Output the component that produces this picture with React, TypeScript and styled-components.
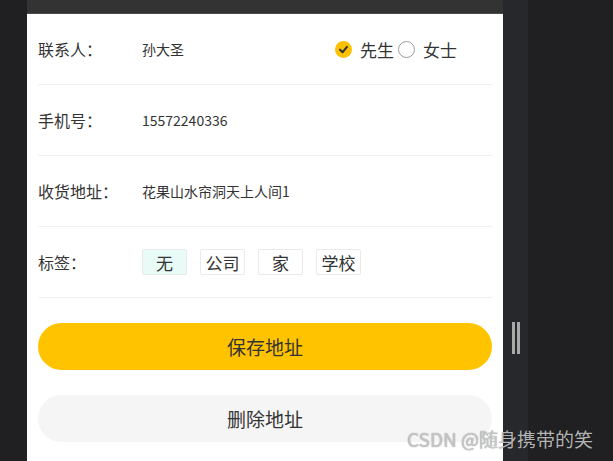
import React, { useState } from 'react';
import styled, { createGlobalStyle } from 'styled-components';

const GlobalStyle = createGlobalStyle`
  html, body {
    margin: 0;
    padding: 0;
    background: #202022;
    font-family: "Noto Sans CJK SC", "Noto Sans", sans-serif;
  }
`;

const Screen = styled.div`
  position: relative;
  display: flex;
  height: 461px;
  overflow: hidden;
  background: #202022;
`;

const SideStrip = styled.div`
  width: 27px;
  flex-shrink: 0;
  background: #202022;
`;

const Phone = styled.div`
  width: 476px;
  flex-shrink: 0;
  display: flex;
  flex-direction: column;
  background: #fff;
`;

const TopBar = styled.div`
  height: 13px;
  background: #333333;
  border-bottom: 1px solid #4a4a4a;
`;

const Form = styled.div`
  padding: 0 11px;
  display: flex;
  flex-direction: column;
`;

const Row = styled.div`
  height: 70px;
  display: flex;
  align-items: center;
  border-bottom: 1px solid #f0f0f0;
`;

const Label = styled.div`
  width: 104px;
  flex-shrink: 0;
  font-size: 16px;
  color: #333;
`;

const Value = styled.div`
  flex: 1;
  font-size: 14px;
  color: #333;
`;

const RadioGroup = styled.div`
  display: flex;
  align-items: center;
  margin-right: 35px;
`;

const RadioItem = styled.label`
  display: flex;
  align-items: center;
  gap: 8px;
  font-size: 17px;
  color: #333;
  margin-left: 4px;
`;

const RadioDot = styled.span<{ $checked: boolean }>`
  width: 17px;
  height: 17px;
  box-sizing: border-box;
  border-radius: 50%;
  display: flex;
  align-items: center;
  justify-content: center;
  background: ${(p) => (p.$checked ? '#fcc100' : '#fff')};
  border: ${(p) => (p.$checked ? 'none' : '1.5px solid #999')};
`;

const Tags = styled.div`
  display: flex;
  gap: 13px;
`;

const Tag = styled.span<{ $active: boolean }>`
  width: 45px;
  height: 26px;
  box-sizing: border-box;
  display: flex;
  align-items: center;
  justify-content: center;
  font-size: 17px;
  color: #333;
  border: 1px solid #eaeaea;
  border-radius: 2px;
  background: ${(p) => (p.$active ? '#e8fbf6' : '#fff')};
`;

const Button = styled.button<{ $primary?: boolean }>`
  margin-top: ${(p) => (p.$primary ? '25px' : '25px')};
  height: 47px;
  width: 100%;
  border: none;
  border-radius: 24px;
  font-family: inherit;
  font-size: 19px;
  color: #333;
  background: ${(p) => (p.$primary ? '#ffc300' : '#f5f5f5')};
  cursor: pointer;
`;

const Gutter = styled.div`
  width: 25px;
  flex-shrink: 0;
  background: #27282c;
  display: flex;
  justify-content: center;
  gap: 2px;
  padding-top: 322px;
  box-sizing: border-box;
`;

const Grip = styled.span`
  width: 3px;
  height: 32px;
  background: #a9a9a9;
`;

const Rest = styled.div`
  flex: 1;
  background: #202022;
`;

const Watermark = styled.div`
  position: absolute;
  left: 407px;
  top: 425px;
  font-size: 19px;
  color: rgba(210, 210, 210, 0.85);
  text-shadow: 0 0 1px rgba(0, 0, 0, 0.5);
  white-space: nowrap;
`;

const Check = () => (
  <svg width="11" height="11" viewBox="0 0 12 12">
    <path d="M2.2 6.2 L5 9 L9.8 3.2" fill="none" stroke="#333" strokeWidth="2.2" strokeLinecap="round" strokeLinejoin="round" />
  </svg>
);

const tagList = ['无', '公司', '家', '学校'];

const App = () => {
  const [gender, setGender] = useState('先生');
  const [tag, setTag] = useState('无');

  return (
    <Screen>
      <GlobalStyle />
      <SideStrip />
      <Phone>
        <TopBar />
        <Form>
          <Row>
            <Label>联系人：</Label>
            <Value>孙大圣</Value>
            <RadioGroup>
              {['先生', '女士'].map((g) => (
                <RadioItem key={g} onClick={() => setGender(g)}>
                  <RadioDot $checked={gender === g}>{gender === g && <Check />}</RadioDot>
                  {g}
                </RadioItem>
              ))}
            </RadioGroup>
          </Row>
          <Row>
            <Label>手机号：</Label>
            <Value>15572240336</Value>
          </Row>
          <Row>
            <Label>收货地址：</Label>
            <Value>花果山水帘洞天上人间1</Value>
          </Row>
          <Row>
            <Label>标签：</Label>
            <Tags>
              {tagList.map((t) => (
                <Tag key={t} $active={tag === t} onClick={() => setTag(t)}>
                  {t}
                </Tag>
              ))}
            </Tags>
          </Row>
          <Button $primary>保存地址</Button>
          <Button>删除地址</Button>
        </Form>
      </Phone>
      <Gutter>
        <Grip />
        <Grip />
      </Gutter>
      <Rest />
      <Watermark>CSDN @随身携带的笑</Watermark>
    </Screen>
  );
};

export default App;
